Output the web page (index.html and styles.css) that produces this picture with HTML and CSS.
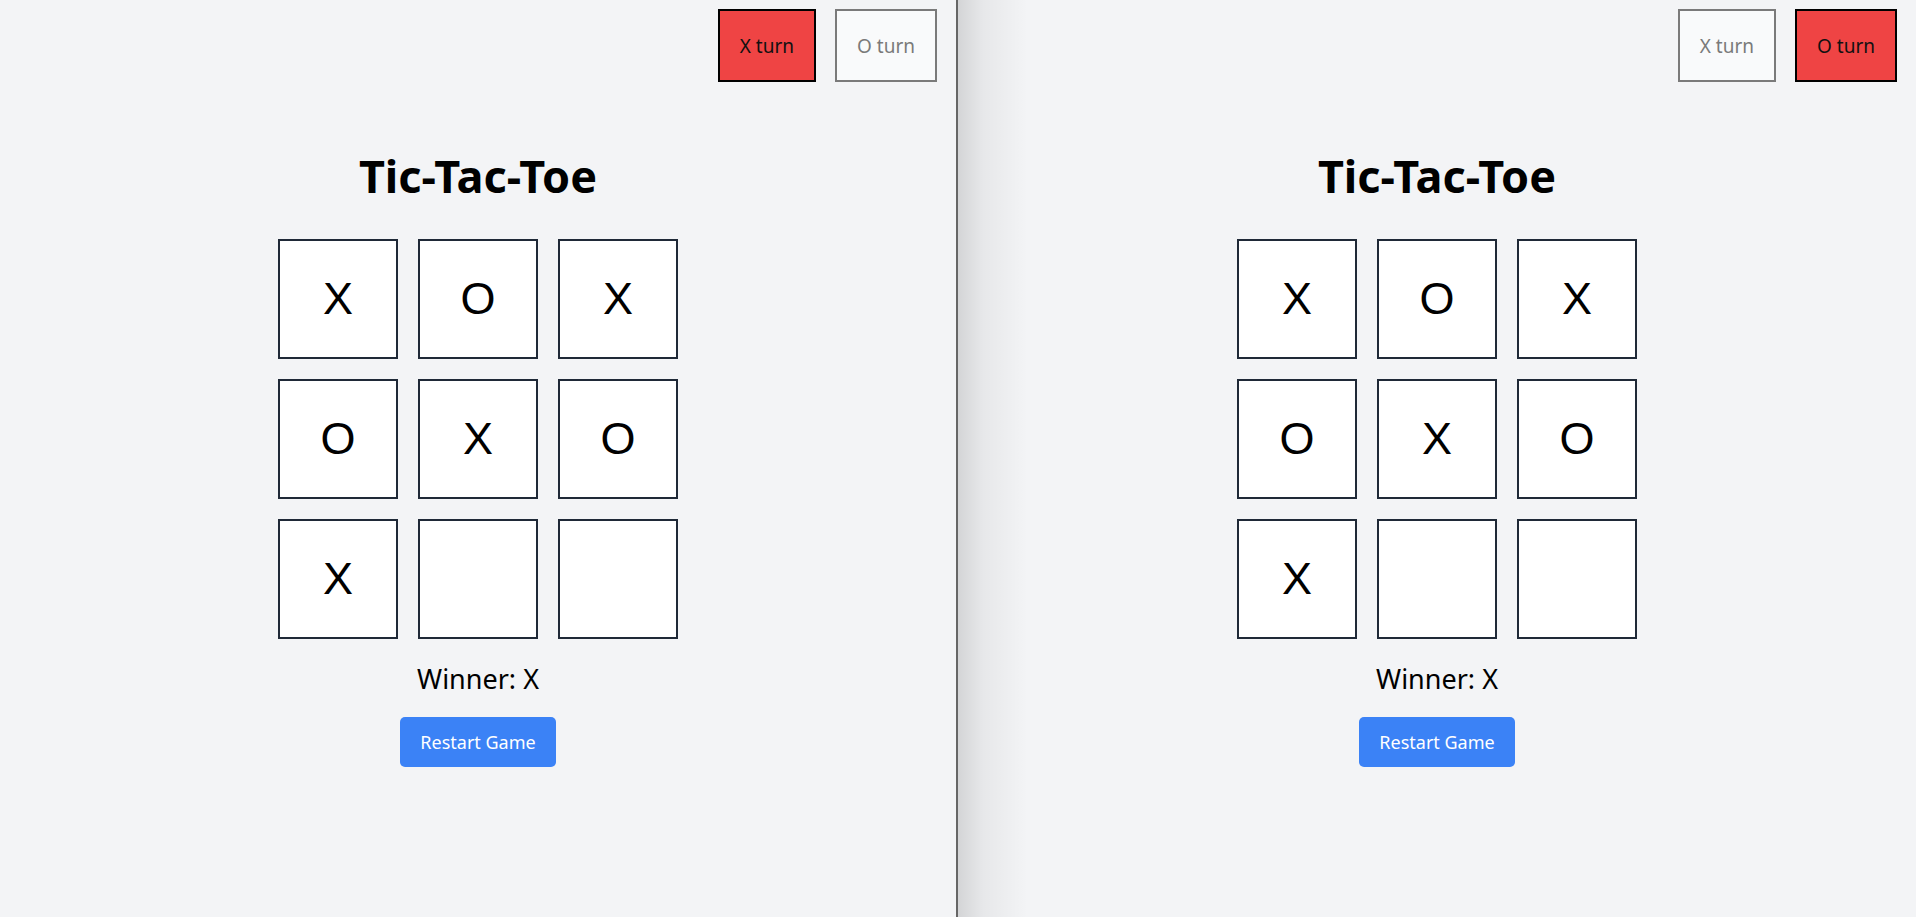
FILE: index.html
```html
<!DOCTYPE html>
<html>
<head>
<meta charset="utf-8">
<link rel="stylesheet" href="styles.css">
</head>
<body>
<div class="screen">
  <section class="panel">
    <div class="turns">
      <button class="turn active">X turn</button>
      <button class="turn">O turn</button>
    </div>
    <div class="game">
      <h1 class="title">Tic-Tac-Toe</h1>
      <div class="board">
        <button class="cell">X</button><button class="cell">O</button><button class="cell">X</button>
        <button class="cell">O</button><button class="cell">X</button><button class="cell">O</button>
        <button class="cell">X</button><button class="cell"></button><button class="cell"></button>
      </div>
      <p class="status">Winner: X</p>
      <button class="restart">Restart Game</button>
    </div>
  </section>
  <div class="divider"></div>
  <section class="panel panel-right">
    <div class="turns">
      <button class="turn">X turn</button>
      <button class="turn active">O turn</button>
    </div>
    <div class="game">
      <h1 class="title">Tic-Tac-Toe</h1>
      <div class="board">
        <button class="cell">X</button><button class="cell">O</button><button class="cell">X</button>
        <button class="cell">O</button><button class="cell">X</button><button class="cell">O</button>
        <button class="cell">X</button><button class="cell"></button><button class="cell"></button>
      </div>
      <p class="status">Winner: X</p>
      <button class="restart">Restart Game</button>
    </div>
  </section>
</div>
</body>
</html>
```
FILE: styles.css
```css
* { box-sizing: border-box; }
html, body { margin: 0; padding: 0; }
body {
  background: #f3f4f6;
  font-family: "Noto Sans", "Open Sans", sans-serif;
  color: #000;
}
.screen {
  display: flex;
  height: 917px;
  overflow: hidden;
}
.panel {
  width: 956px;
  flex: none;
  background: #f3f4f6;
}
.panel-right {
  width: 958px;
  background: linear-gradient(to right, rgba(0,0,0,0.13) 0px, rgba(0,0,0,0.05) 25px, rgba(0,0,0,0) 70px), #f3f4f6;
}
.divider {
  width: 2px;
  flex: none;
  background: #666;
}
.turns {
  display: flex;
  justify-content: flex-end;
  gap: 19px;
  padding: 9px 19px 0 0;
}
.turn {
  height: 73px;
  padding: 0 20px;
  font-family: inherit;
  font-size: 19px;
  background: #f9fafb;
  color: #7a7a7a;
  border: 2px solid #7a7a7a;
  border-radius: 0;
}
.turn.active {
  background: #ef4444;
  color: #111;
  border-color: #000;
}
.game {
  display: flex;
  flex-direction: column;
  align-items: center;
}
.title {
  margin: 69px 0 0;
  font-size: 45px;
  line-height: 50px;
  font-weight: 700;
}
.board {
  margin-top: 38px;
  display: grid;
  grid-template-columns: repeat(3, 120px);
  grid-auto-rows: 120px;
  gap: 20px;
}
.cell {
  background: #fff;
  border: 2px solid #1f2937;
  font-family: "Liberation Sans", Arial, sans-serif;
  font-size: 45px;
  color: #000;
  padding: 0;
  display: flex;
  align-items: center;
  justify-content: center;
}
.status {
  margin: 22px 0 0;
  font-size: 27px;
  line-height: 36px;
}
.restart {
  margin-top: 20px;
  background: #3b82f6;
  color: #fff;
  border: none;
  border-radius: 5px;
  font-family: inherit;
  font-size: 18px;
  line-height: 30px;
  padding: 10px 20px;
}
```
